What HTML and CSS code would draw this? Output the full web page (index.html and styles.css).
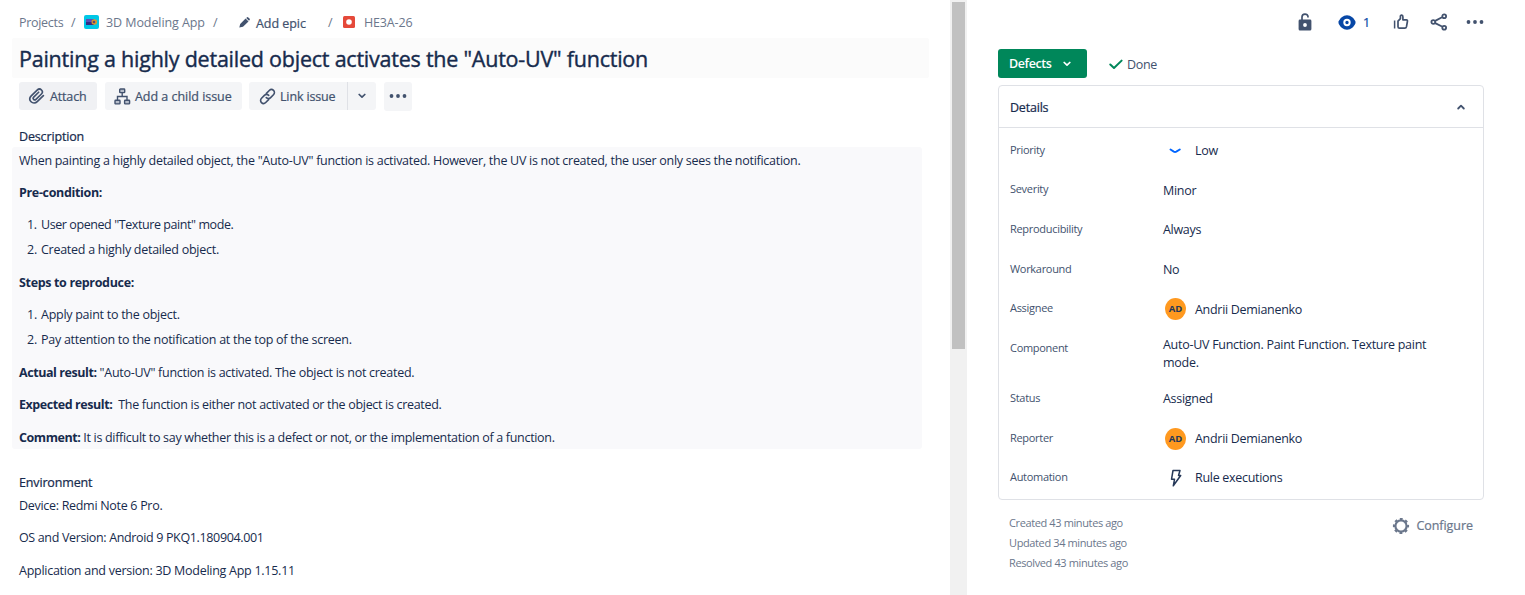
FILE: index.html
```html
<!DOCTYPE html>
<html lang="en">
<head>
<meta charset="utf-8">
<title>HE3A-26</title>
<link rel="stylesheet" href="styles.css">
</head>
<body>
<div class="page">
  <main class="issue">
    <nav class="crumbs">
      <span class="crumb-projects">Projects</span><span class="slash s1">/</span>
      <svg class="app-icon" width="15" height="14" viewBox="0 0 15 14"><rect width="15" height="14" rx="2" fill="#00c7e6"/><rect x="2" y="4" width="8" height="3" fill="#5b4fb5"/><rect x="2" y="7" width="8" height="3" fill="#352c83"/><circle cx="10.300" cy="7" r="2.800" fill="#d9972b"/><circle cx="10" cy="7" r="1.300" fill="#5a4a72"/></svg>
      <span class="crumb-app">3D Modeling App</span><span class="slash s2">/</span>
      <svg class="pencil" width="11" height="11" viewBox="0 0 11 11"><path fill="#42526e" d="M.3 10.6 1.200 7 6.600 1.500 9.500 4.400 4 9.700zM7.200 1 7.800.5Q8.600-.2 9.300.4L10.500 1.600Q11.200 2.400 10.600 3L10 3.700z"/></svg>
      <span class="crumb-epic">Add epic</span><span class="slash s3">/</span>
      <svg class="bug" width="12" height="12" viewBox="0 0 12 12"><rect width="12" height="12" rx="1.5" fill="#e5493a"/><circle cx="6" cy="6" r="2.800" fill="#fff"/></svg>
      <span class="crumb-key">HE3A-26</span>
    </nav>
    <h1 class="title"><span>Painting a highly detailed object activates the "Auto-UV" function</span></h1>
    <div class="toolbar">
      <button class="btn attach"><svg width="18" height="18" viewBox="0 0 24 24"><path fill="none" stroke="#42526e" stroke-width="2.200" stroke-linecap="round" d="M20.500 11.500 12.300 19.500C9.900 21.900 6.200 21.900 4.100 19.700S2 14.200 4.300 11.900L12.200 4.200C13.900 2.500 16.500 2.500 18 4S19.500 7.700 17.900 9.300L10.600 16.400C9.700 17.300 8.300 17.300 7.500 16.500S6.700 14.300 7.600 13.400L14.200 7"/></svg><span>Attach</span></button>
      <button class="btn child"><svg width="17" height="17" viewBox="0 0 17 17"><g fill="#b6bdca" stroke="#42526e" stroke-width="1.400"><rect x="5.700" y="1" width="5" height="3.600" rx=".7"/><rect x="1" y="12.300" width="5" height="3.600" rx=".7"/><rect x="10.600" y="12.300" width="5" height="3.600" rx=".7"/><path fill="none" d="M8.200 4.600V8.500M3.500 12.300V8.500H13V12.300"/></g></svg><span>Add a child issue</span></button>
      <div class="split"><button class="btn link"><svg width="17" height="17" viewBox="0 0 24 24"><g fill="none" stroke="#42526e" stroke-width="2.300" stroke-linecap="round"><path d="M10.500 7.500 14.500 3.500C16.300 1.700 18.800 1.700 20.500 3.400S22.200 7.700 20.400 9.500L16.400 13.500C14.600 15.300 12 15.300 10.300 13.600"/><path d="M13.500 16.500 9.500 20.500C7.700 22.300 5.200 22.300 3.500 20.600S1.800 16.300 3.600 14.500L7.600 10.500C9.400 8.700 12 8.700 13.700 10.400"/></g></svg><span>Link issue</span></button><button class="btn drop"><svg width="8" height="6" viewBox="0 0 8 6"><path d="M1.200 1.500 4 4.200 6.800 1.500" fill="none" stroke="#42526e" stroke-width="1.700" stroke-linecap="round" stroke-linejoin="round"/></svg></button></div>
      <button class="btn more"><svg width="18" height="4" viewBox="0 0 18 4"><g fill="#42526e"><circle cx="2.500" cy="2" r="1.900"/><circle cx="9" cy="2" r="1.900"/><circle cx="15.500" cy="2" r="1.900"/></g></svg></button>
    </div>
    <h2 class="section-title">Description</h2>
    <section class="description">
      <p>When painting a highly detailed object, the "Auto-UV" function is activated. However, the UV is not created, the user only sees the notification.</p>
      <p><b class="wide">Pre-condition:</b></p>
      <ol><li class="tight"><span class="num">1.</span>User opened "Texture paint" mode.</li><li><span class="num">2.</span>Created a highly detailed object.</li></ol>
      <p class="after"><b class="wide">Steps to reproduce:</b></p>
      <ol><li><span class="num">1.</span>Apply paint to the object.</li><li><span class="num">2.</span>Pay attention to the notification at the top of the screen.</li></ol>
      <p class="after"><b>Actual result:</b> "Auto-UV" function is activated. The object is not created.</p>
      <p class="snug"><b>Expected result:</b>&nbsp; The function is either not activated or the object is created.</p>
      <p class="after snug"><b>Comment:</b> It is difficult to say whether this is a defect or not, or the implementation of a function.</p>
    </section>
    <h2 class="section-title env-title">Environment</h2>
    <section class="environment">
      <p>Device: Redmi Note 6 Pro.</p>
      <p class="os">OS and Version: Android 9 PKQ1.180904.001</p>
      <p class="after app-version">Application and version: 3D Modeling App 1.15.11</p>
    </section>
  </main>
  <div class="scrollbar"><div class="thumb"></div></div>
  <aside class="side">
    <div class="actions">
      <svg class="lock" width="14" height="18" viewBox="0 0 14 18"><path fill="#42526e" fill-rule="evenodd" d="M2 6.500H12Q13.400 6.500 13.400 7.900V16Q13.400 17.500 12 17.500H2Q.6 17.500.6 16V7.900Q.6 6.500 2 6.500zM7 10.100A1.900 1.900 0 1 0 7 13.900 1.900 1.900 0 1 0 7 10.100z"/><path fill="none" stroke="#42526e" stroke-width="1.700" d="M4 8V4C4 .2 10 .2 10 3.700V4.500"/></svg>
      <svg class="eye" width="18" height="15" viewBox="0 0 18 15"><path fill="#0747a6" d="M9 .3C13 .3 16 3.500 17.300 6.300Q17.800 7.500 17.300 8.700C16 11.500 13 14.700 9 14.700S2 11.500.7 8.700Q.2 7.500.7 6.300C2 3.500 5 .3 9 .3z"/><circle cx="9" cy="7.500" r="2.700" fill="none" stroke="#fff" stroke-width="2"/></svg>
      <span class="watchers">1</span>
      <svg class="like" width="16" height="16" viewBox="0 0 16 16"><path d="M1.600 6.500V14.500" fill="none" stroke="#42526e" stroke-width="1.500"/><path fill="none" stroke="#42526e" stroke-width="1.700" stroke-linejoin="round" d="M5 7.200 7.400 4.600V2.200Q7.600.9 8.700 1.100 9.900 1.300 9.900 2.900V5.800H13.300Q14.700 6 14.400 7.500L13.500 12.700Q13.200 14.200 11.800 14.200H6.500Q5 14.200 5 12.700z"/></svg>
      <svg class="share" width="18" height="18" viewBox="0 0 18 18"><g fill="none" stroke="#42526e" stroke-width="1.800"><path d="M5.200 7.900 12 4.200M5.200 10.100 12 13.500"/><circle cx="3.300" cy="9" r="1.900"/><circle cx="14.200" cy="3.200" r="1.900"/><circle cx="14.200" cy="14.700" r="1.900"/></g></svg>
      <svg class="dots" width="18" height="4" viewBox="0 0 18 4"><g fill="#42526e"><circle cx="2.500" cy="2" r="1.900"/><circle cx="9" cy="2" r="1.900"/><circle cx="15.500" cy="2" r="1.900"/></g></svg>
    </div>
    <div class="status-row">
      <button class="status"><span>Defects</span><svg width="8" height="6" viewBox="0 0 8 6"><path d="M1.200 1.500 4 4.200 6.800 1.500" fill="none" stroke="#fff" stroke-width="1.700" stroke-linecap="round" stroke-linejoin="round"/></svg></button>
      <span class="done"><svg width="14" height="11" viewBox="0 0 14 11"><path d="M1.300 5.500 5 9 12.600 1.600" fill="none" stroke="#00875a" stroke-width="2" stroke-linecap="round" stroke-linejoin="round"/></svg><span>Done</span></span>
    </div>
    <section class="card">
      <header class="card-head"><span>Details</span><svg width="8" height="6" viewBox="0 0 8 6"><path d="M1.200 4.500 4 1.700 6.800 4.500" fill="none" stroke="#42526e" stroke-width="1.800" stroke-linecap="round" stroke-linejoin="round"/></svg></header>
      <dl class="fields">
        <dt>Priority</dt><dd class="with-icon"><svg width="24" height="22" viewBox="0 0 24 22"><path d="M7.500 9.500 10.800 11.600Q12 12.300 13.300 11.600L16.800 9.500" fill="none" stroke="#0065ff" stroke-width="1.900" stroke-linecap="round"/></svg><span>Low</span></dd>
        <dt class="up">Severity</dt><dd>Minor</dd>
        <dt>Reproducibility</dt><dd>Always</dd>
        <dt>Workaround</dt><dd>No</dd>
        <dt>Assignee</dt><dd class="with-icon drop-1"><span class="avatar">AD</span><span>Andrii Demianenko</span></dd>
        <dt class="component">Component</dt><dd class="multi">Auto-UV Function. Paint Function. Texture paint<br>mode.</dd>
        <dt>Status</dt><dd>Assigned</dd>
        <dt>Reporter</dt><dd class="with-icon"><span class="avatar">AD</span><span>Andrii Demianenko</span></dd>
        <dt>Automation</dt><dd class="with-icon"><svg width="24" height="22" viewBox="0 0 24 22"><path d="M10 3.500H17L15.500 8.500H17.700L10.300 18.800 11.500 12.300H8.500z" fill="none" stroke="#253858" stroke-width="1.500" stroke-linejoin="round"/></svg><span>Rule executions</span></dd>
      </dl>
    </section>
    <footer class="foot">
      <div class="dates"><p>Created 43 minutes ago</p><p>Updated 34 minutes ago</p><p>Resolved 43 minutes ago</p></div>
      <div class="configure"><svg width="18" height="18" viewBox="-9 -9 18 18"><circle r="5.600" fill="none" stroke="#6b778c" stroke-width="2.200"/><circle r="7" fill="none" stroke="#6b778c" stroke-width="2.200" stroke-dasharray="2.750 2.750" stroke-dashoffset="1.370"/></svg><span>Configure</span></div>
    </footer>
  </aside>
</div>
</body>
</html>
```
FILE: styles.css
```css
* { box-sizing: border-box; }
body { margin: 0; background: #fff; color: #172b4d; font: 12.5px/22px "Open Sans", "Noto Sans", sans-serif; letter-spacing: -0.3px; }
p, h1, h2, ol, dl, dt, dd { margin: 0; padding: 0; font-weight: 400; white-space: nowrap; }
ol { list-style: none; }
svg { display: block; flex: none; }
span { white-space: nowrap; }
button { font: inherit; letter-spacing: inherit; color: inherit; border: 0; margin: 0; padding: 0; }
.page { display: flex; width: 1525px; height: 595px; overflow: hidden; }
.issue { width: 950px; padding: 11px 0 0 12px; flex: none; }
.crumbs { display: flex; align-items: center; height: 22px; padding-left: 7px; color: #6b778c; }
.crumbs > span { padding-top: 2px; }
.crumb-projects { width: 44px; }
.slash { width: 21px; padding-left: 8px; }
.crumb-app { width: 99px; margin-left: 7px; letter-spacing: -0.08px; }
.s2 { width: 34px; }
.crumbs .crumb-epic { width: 52px; margin-left: 6px; padding-top: 3px; color: #42526e; letter-spacing: -0.05px; }
.s3 { width: 35px; padding-left: 20px; }
.crumb-key { margin-left: 9px; letter-spacing: -0.15px; }
.crumb-epic, .title, .btn, .section-title, .card-head, .configure, .watchers { -webkit-text-stroke: 0.22px currentColor; }
.title { display: flex; align-items: center; width: 917px; height: 40px; margin-top: 5px; padding: 1px 0 0 7px; background: #fbfbfb; border-radius: 2px; font-size: 21.5px; letter-spacing: -0.23px; -webkit-text-stroke-width: 0.4px; }
.toolbar { display: flex; height: 28px; margin: 4px 0 0 7px; color: #42526e; }
.btn { display: flex; align-items: center; height: 28px; background: #f4f5f7; border-radius: 3px; letter-spacing: -0.15px; }
.btn span { padding-top: 1px; }
.attach { width: 78px; padding-left: 9px; gap: 4px; background: #f0f1f4; }
.child { width: 137px; margin-left: 8px; padding-left: 9px; gap: 4px; letter-spacing: -0.03px; }
.split { display: flex; margin-left: 7px; }
.link { width: 98px; padding-left: 10px; gap: 4px; border-radius: 3px 0 0 3px; }
.drop { width: 29px; justify-content: center; border-left: 1px solid #dfe1e6; border-radius: 0 3px 3px 0; }
.more { width: 28px; height: 29px; justify-content: center; margin-left: 8px; padding-bottom: 1px; }
.section-title { height: 22px; margin: 15px 0 0 7px; padding-top: 1px; font-size: 12.5px; line-height: 22px; letter-spacing: -0.15px; }
.description { width: 910px; height: 302px; padding: 3px 0 0 7px; background: #f9f9fb; border-radius: 3px; letter-spacing: -0.28px; }
p + p, ol, p.after { margin-top: 10px; }
.description p, .description li, .environment p { height: 22px; }
p.after, .description p.after, .environment p.after { margin-top: 11px; }
.snug { letter-spacing: -0.31px; }
b { font-weight: 700; letter-spacing: -0.43px; }
.wide { letter-spacing: -0.34px; }
ol { letter-spacing: -0.27px; }
.tight { letter-spacing: -0.42px; }
li + li { margin-top: 3px; }
li { display: flex; padding-left: 8px; }
.num { width: 14px; }
.env-title { margin-top: 22px; }
.environment { padding: 2px 0 0 7px; }
.os { letter-spacing: -0.35px; }
.app-version { letter-spacing: -0.27px; }
.scrollbar { width: 17px; padding: 2px 2px 0; background: #f1f1f1; flex: none; }
.thumb { height: 347px; background: #c1c1c1; }
.side { width: 558px; padding: 11px 0 0 31px; }
.actions { display: flex; align-items: center; height: 22px; padding-left: 300px; }
.eye { margin-left: 26px; }
.watchers { width: 8px; margin-left: 7px; padding-top: 2px; color: #0747a6; }
.like { margin-left: 22px; }
.share { margin-left: 21px; }
.dots { margin-left: 18px; }
.status-row { display: flex; align-items: center; height: 29px; margin-top: 16px; }
.status { display: flex; align-items: center; width: 89px; height: 29px; padding-left: 11px; gap: 11px; background: #00875a; border-radius: 3px; color: #fff; font-weight: 600; letter-spacing: -0.4px; }
.done { display: flex; align-items: center; gap: 4px; margin-left: 22px; padding-top: 2px; color: #42526e; }
.card { width: 486px; height: 415px; margin-top: 7px; border: 1px solid #dfe1e6; border-radius: 4px; }
.card-head { display: flex; align-items: center; justify-content: space-between; height: 42px; padding: 0 18px 0 11px; border-bottom: 1px solid #dfe1e6; letter-spacing: -0.2px; }
.card-head span { padding-top: 2px; }
.fields { display: grid; grid-template-columns: 153px 1fr; grid-template-rows: 40px 39px 40px 39px 40px 50px 40px 39px 40px; padding: 3px 0 0 11px; align-items: center; }
dt { padding-bottom: 2px; color: #42526e; font-size: 11px; }
.up { padding-bottom: 4px; }
.component { padding-bottom: 13px; }
.multi { line-height: 18px; letter-spacing: -0.28px; }
.with-icon { display: flex; align-items: center; gap: 9px; }
.with-icon svg { margin-right: -1px; }
.drop-1 span + span { padding-top: 1px; }
.avatar { width: 21px; height: 22px; margin-left: 2px; border-radius: 50%; background: #ff991f; color: #253858; font-size: 9.5px; font-weight: 700; line-height: 22px; text-align: center; letter-spacing: -0.1px; }
.foot { display: flex; justify-content: space-between; width: 475px; padding: 13px 0 0 11px; color: #6b778c; }
.dates { font-size: 11px; line-height: 20px; letter-spacing: -0.38px; }
.dates p + p { margin-top: 0; }
.configure { display: flex; align-items: center; gap: 6px; height: 25px; letter-spacing: -0.05px; }
.configure span { padding-top: 1px; }
```
